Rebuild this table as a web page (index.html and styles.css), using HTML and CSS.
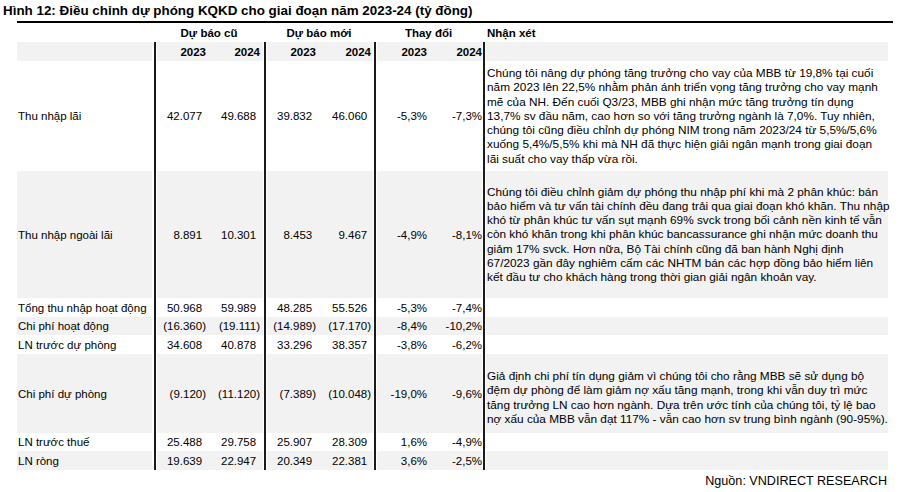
FILE: index.html
```html
<!DOCTYPE html>
<html lang="vi">
<head>
<meta charset="utf-8">
<title>Hình 12</title>
<link rel="stylesheet" href="styles.css">
</head>
<body>
<div class="fig">
  <h1 class="title">Hình 12: Điều chỉnh dự phóng KQKD cho giai đoạn năm 2023-24 (tỷ đồng)</h1>
  <div class="rule"></div>
  <table class="kq">
    <colgroup>
      <col class="w-label"><col class="w-a"><col class="w-b"><col class="w-a"><col class="w-b"><col class="w-a"><col class="w-c"><col class="w-note">
    </colgroup>
    <tr class="h1">
      <th class="lbl"></th>
      <th colspan="2" class="grp">Dự báo cũ</th>
      <th colspan="2" class="grp">Dự báo mới</th>
      <th colspan="2" class="grp">Thay đổi</th>
      <th class="note-h">Nhận xét</th>
    </tr>
    <tr class="h2 sh">
      <th class="lbl"></th>
      <th class="gl c1">2023</th><th class="ge c2">2024</th>
      <th class="gl c3">2023</th><th class="ge c4">2024</th>
      <th class="gl c5">2023</th><th class="ge c6">2024</th>
      <th class="gl note"></th>
    </tr>
    <tr class="r-lai">
      <td class="lbl">Thu nhập lãi</td>
      <td class="gl c1 pos">42.077</td><td class="ge c2 pos">49.688</td>
      <td class="gl c3 pos">39.832</td><td class="ge c4 pos">46.060</td>
      <td class="gl c5">-5,3%</td><td class="ge c6">-7,3%</td>
      <td class="gl note">Chúng tôi nâng dự phóng tăng trưởng cho vay của MBB từ 19,8% tại cuối<br>năm 2023 lên 22,5% nhằm phản ánh triển vọng tăng trưởng cho vay mạnh<br>mẽ của NH. Đến cuối Q3/23, MBB ghi nhận mức tăng trưởng tín dụng<br>13,7% sv đầu năm, cao hơn so với tăng trưởng ngành là 7,0%. Tuy nhiên,<br>chúng tôi cũng điều chỉnh dự phóng NIM trong năm 2023/24 từ 5,5%/5,6%<br>xuống 5,4%/5,5% khi mà NH đã thực hiện giải ngân mạnh trong giai đoạn<br>lãi suất cho vay thấp vừa rồi.</td>
    </tr>
    <tr class="r-ngoai sh">
      <td class="lbl">Thu nhập ngoài lãi</td>
      <td class="gl c1 pos">8.891</td><td class="ge c2 pos">10.301</td>
      <td class="gl c3 pos">8.453</td><td class="ge c4 pos">9.467</td>
      <td class="gl c5">-4,9%</td><td class="ge c6">-8,1%</td>
      <td class="gl note">Chúng tôi điều chỉnh giảm dự phóng thu nhập phí khi mà 2 phân khúc: bán<br>bảo hiểm và tư vấn tài chính đều đang trải qua giai đoạn khó khăn. Thu nhập<br>khó từ phân khúc tư vấn sụt mạnh 69% svck trong bối cảnh nền kinh tế vẫn<br>còn khó khăn trong khi phân khúc bancassurance ghi nhận mức doanh thu<br>giảm 17% svck. Hơn nữa, Bộ Tài chính cũng đã ban hành Nghị định<br>67/2023 gần đây nghiêm cấm các NHTM bán các hợp đồng bảo hiểm liên<br>kết đầu tư cho khách hàng trong thời gian giải ngân khoản vay.</td>
    </tr>
    <tr class="r-19">
      <td class="lbl">Tổng thu nhập hoạt động</td>
      <td class="gl c1 pos">50.968</td><td class="ge c2 pos">59.989</td>
      <td class="gl c3 pos">48.285</td><td class="ge c4 pos">55.526</td>
      <td class="gl c5">-5,3%</td><td class="ge c6">-7,4%</td>
      <td class="gl note"></td>
    </tr>
    <tr class="r-18 sh">
      <td class="lbl">Chi phí hoạt động</td>
      <td class="gl c1">(16.360)</td><td class="ge c2">(19.111)</td>
      <td class="gl c3">(14.989)</td><td class="ge c4">(17.170)</td>
      <td class="gl c5">-8,4%</td><td class="ge c6">-10,2%</td>
      <td class="gl note"></td>
    </tr>
    <tr class="r-19">
      <td class="lbl">LN trước dự phòng</td>
      <td class="gl c1 pos">34.608</td><td class="ge c2 pos">40.878</td>
      <td class="gl c3 pos">33.296</td><td class="ge c4 pos">38.357</td>
      <td class="gl c5">-3,8%</td><td class="ge c6">-6,2%</td>
      <td class="gl note"></td>
    </tr>
    <tr class="r-dp sh">
      <td class="lbl">Chi phí dự phòng</td>
      <td class="gl c1">(9.120)</td><td class="ge c2">(11.120)</td>
      <td class="gl c3">(7.389)</td><td class="ge c4">(10.048)</td>
      <td class="gl c5">-19,0%</td><td class="ge c6">-9,6%</td>
      <td class="gl note note-low">Giả định chi phí tín dụng giảm vì chúng tôi cho rằng MBB sẽ sử dụng bộ<br>đệm dự phòng để làm giảm nợ xấu tăng mạnh, trong khi vẫn duy trì mức<br>tăng trưởng LN cao hơn ngành. Dựa trên ước tính của chúng tôi, tỷ lệ bao<br>nợ xấu của MBB vẫn đạt 117% - vẫn cao hơn sv trung bình ngành (90-95%).</td>
    </tr>
    <tr class="r-18">
      <td class="lbl">LN trước thuế</td>
      <td class="gl c1 pos">25.488</td><td class="ge c2 pos">29.758</td>
      <td class="gl c3 pos">25.907</td><td class="ge c4 pos">28.309</td>
      <td class="gl c5">1,6%</td><td class="ge c6">-4,9%</td>
      <td class="gl note"></td>
    </tr>
    <tr class="r-19 sh">
      <td class="lbl">LN ròng</td>
      <td class="gl c1 pos">19.639</td><td class="ge c2 pos">22.947</td>
      <td class="gl c3 pos">20.349</td><td class="ge c4 pos">22.381</td>
      <td class="gl c5">3,6%</td><td class="ge c6">-2,5%</td>
      <td class="gl note"></td>
    </tr>
  </table>
  <div class="src">Nguồn: VNDIRECT RESEARCH</div>
</div>
</body>
</html>
```
FILE: styles.css
```css
* { box-sizing: border-box; }
html, body { margin: 0; padding: 0; background: #fff; }
body {
  font-family: "Liberation Sans", Arial, sans-serif;
  color: #000;
}
.fig { width: 900px; height: 492px; overflow: hidden; }

.title {
  margin: 0;
  padding-left: 3px;
  height: 21px;
  font-size: 13.4px;
  line-height: 21px;
  font-weight: bold;
  white-space: nowrap;
}
.rule {
  margin-left: 17px;
  width: 876px;
  height: 2px;
  background: #000;
}

.kq {
  margin-left: 17px;
  width: 871px;
  table-layout: fixed;
  border-collapse: separate;
  border-spacing: 0;
  font-size: 11.5px;
}
.w-label { width: 137px; }
.w-a { width: 56px; }
.w-b { width: 54px; }
.w-c { width: 53px; }
.w-note { width: 405px; }

.kq th, .kq td {
  padding: 0;
  vertical-align: middle;
  white-space: nowrap;
  text-align: right;
  font-weight: normal;
  line-height: 14px;
}
.kq th { font-weight: bold; }

.h1 { height: 19px; }
.h2 { height: 19px; }
.r-lai { height: 110px; }
.r-ngoai { height: 127px; }
.r-19 { height: 19px; }
.r-18 { height: 18px; }
.r-dp { height: 79px; }

.sh > th, .sh > td { background: #f2f2f2; }

.lbl {
  text-align: left !important;
  padding-left: 1px !important;
  border-right: 2px solid #fff;
}
.grp { text-align: center !important; }
.note-h { text-align: left !important; padding-left: 4px !important; }

.gl {
  border-left: 2px solid #1a1a1a;
  box-shadow: inset 1px 0 0 #fff;
}
.ge { border-right: 1px solid #fff; }

.c1 { padding-right: 4px !important; }
.c2 { padding-right: 3px !important; }
.c3 { padding-right: 4px !important; }
.c4 { padding-right: 2px !important; }
.c5 { padding-right: 3px !important; }
.c6 { padding-right: 0 !important; }

.pos::after { content: ")"; visibility: hidden; }

.note {
  text-align: left !important;
  padding: 0 1px 0 2px !important;
  font-size: 11.8px;
  line-height: 14.2px !important;
}
.note-low { padding-top: 8px !important; }

.src {
  text-align: right;
  padding-right: 13px;
  font-size: 12.6px;
  line-height: 22px;
}
```
